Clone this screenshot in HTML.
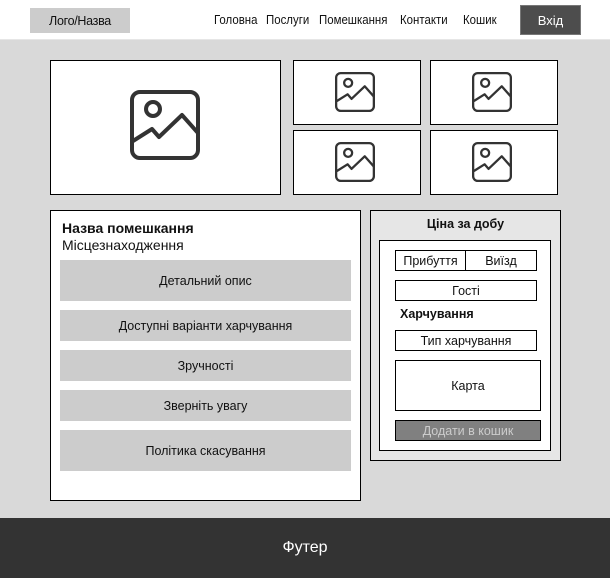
<!DOCTYPE html>
<html><head><meta charset="utf-8"><style>
*{margin:0;padding:0;box-sizing:border-box}
body{width:610px;height:578px;position:relative;background:#d9d9d9;font-family:"Liberation Sans",sans-serif;overflow:hidden;color:#111}
.a{position:absolute}
.c{display:flex;align-items:center;justify-content:center}
.box{background:#fff;border:1px solid #000}
.btn{position:absolute;left:9px;width:291px;background:#ccc;font-size:12.5px}
.f{position:absolute;border:1px solid #000;background:#fff;font-size:12.5px}
.n{position:absolute;top:12px;font-size:13px;transform-origin:0 0;white-space:nowrap}
</style></head><body>
<div class="a" style="left:0;top:0;width:610px;height:40px;background:#fff;border-bottom:1px solid #e6e6e6"></div>
<div class="a c" style="left:30px;top:8px;width:100px;height:25px;background:#ccc;font-size:12.5px;letter-spacing:-0.3px">Лого/Назва</div>
<div class="n" style="left:214px;transform:scaleX(0.88)">Головна</div>
<div class="n" style="left:266px;transform:scaleX(0.88)">Послуги</div>
<div class="n" style="left:319px;transform:scaleX(0.88)">Помешкання</div>
<div class="n" style="left:400px;transform:scaleX(0.88)">Контакти</div>
<div class="n" style="left:463px;transform:scaleX(0.88)">Кошик</div>
<div class="a c" style="left:520px;top:5px;width:61px;height:30px;background:#4d4d4d;color:#fff;font-size:13px;border:1px solid #777">Вхід</div>

<svg width="0" height="0" style="position:absolute"><defs><g id="ic" fill="none" stroke="#333" stroke-width="4" stroke-linejoin="round"><rect x="2" y="2" width="66" height="66" rx="8"/><circle cx="23" cy="19" r="7"/><path d="M3 51 L22 39 L29 47 L52 25 L68 43"/></g></defs></svg>

<div class="a box" style="left:50px;top:60px;width:231px;height:135px"></div>
<svg class="a" style="left:130px;top:90px" width="70" height="70" viewBox="0 0 70 70"><use href="#ic"/></svg>
<div class="a box" style="left:293px;top:60px;width:128px;height:65px"></div>
<div class="a box" style="left:430px;top:60px;width:128px;height:65px"></div>
<div class="a box" style="left:293px;top:130px;width:128px;height:65px"></div>
<div class="a box" style="left:430px;top:130px;width:128px;height:65px"></div>
<svg class="a" style="left:335px;top:72px" width="40" height="40" viewBox="0 0 70 70"><use href="#ic"/></svg>
<svg class="a" style="left:472px;top:72px" width="40" height="40" viewBox="0 0 70 70"><use href="#ic"/></svg>
<svg class="a" style="left:335px;top:142px" width="40" height="40" viewBox="0 0 70 70"><use href="#ic"/></svg>
<svg class="a" style="left:472px;top:142px" width="40" height="40" viewBox="0 0 70 70"><use href="#ic"/></svg>

<div class="a box" style="left:50px;top:210px;width:311px;height:291px">
<div class="a" style="left:11px;top:9px;font-size:14px;font-weight:bold">Назва помешкання</div>
<div class="a" style="left:11px;top:26px;font-size:14px">Місцезнаходження</div>
<div class="btn c" style="top:49px;height:41px">Детальний опис</div>
<div class="btn c" style="top:99px;height:31px">Доступні варіанти харчування</div>
<div class="btn c" style="top:139px;height:31px">Зручності</div>
<div class="btn c" style="top:179px;height:31px">Зверніть увагу</div>
<div class="btn c" style="top:219px;height:41px">Політика скасування</div>
</div>

<div class="a" style="left:370px;top:210px;width:191px;height:251px;background:#e6e6e6;border:1px solid #000"></div>
<div class="a" style="left:370px;top:217px;width:191px;text-align:center;font-size:12.5px;font-weight:bold">Ціна за добу</div>
<div class="a box" style="left:379px;top:240px;width:172px;height:211px"></div>
<div class="f c" style="left:395px;top:250px;width:71px;height:21px">Прибуття</div>
<div class="f c" style="left:465px;top:250px;width:72px;height:21px">Виїзд</div>
<div class="f c" style="left:395px;top:280px;width:142px;height:21px">Гості</div>
<div class="a" style="left:400px;top:307px;font-size:12.5px;font-weight:bold">Харчування</div>
<div class="f c" style="left:395px;top:330px;width:142px;height:21px">Тип харчування</div>
<div class="f c" style="left:395px;top:360px;width:146px;height:51px">Карта</div>
<div class="f c" style="left:395px;top:420px;width:146px;height:21px;background:#808080;color:#ccc">Додати в кошик</div>

<div class="a c" style="left:0;top:518px;width:610px;height:60px;background:#333;color:#fff;font-size:16px">Футер</div>
</body></html>
